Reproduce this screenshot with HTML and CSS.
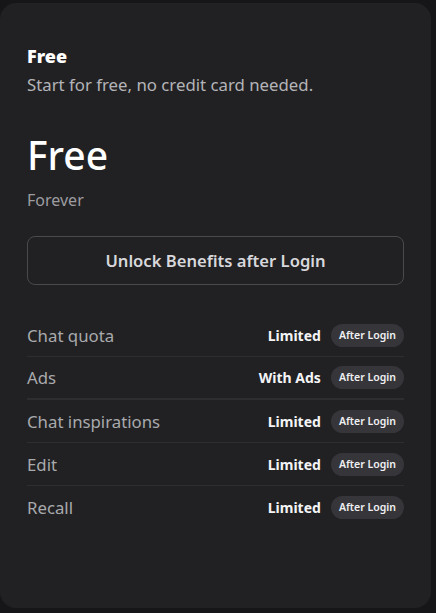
FILE: index.html
```html
<!DOCTYPE html>
<html>
<head>
<meta charset="utf-8">
<link rel="stylesheet" href="styles.css">
</head>
<body>
<div class="card">
  <div class="plan-name">Free</div>
  <div class="plan-desc">Start for free, no credit card needed.</div>
  <div class="price">Free</div>
  <div class="period">Forever</div>
  <button class="unlock">Unlock Benefits after Login</button>
  <ul class="features">
    <li class="row"><span class="label">Chat quota</span><span class="right"><span class="value">Limited</span><span class="badge">After Login</span></span></li>
    <li class="row"><span class="label">Ads</span><span class="right"><span class="value">With Ads</span><span class="badge">After Login</span></span></li>
    <li class="row"><span class="label">Chat inspirations</span><span class="right"><span class="value">Limited</span><span class="badge">After Login</span></span></li>
    <li class="row"><span class="label">Edit</span><span class="right"><span class="value">Limited</span><span class="badge">After Login</span></span></li>
    <li class="row"><span class="label">Recall</span><span class="right"><span class="value">Limited</span><span class="badge">After Login</span></span></li>
  </ul>
</div>
</body>
</html>
```
FILE: styles.css
```css
html, body {
  margin: 0;
  padding: 0;
  background: #161618;
  height: 100%;
}
body {
  font-family: "Noto Sans", "Open Sans", sans-serif;
  padding-top: 3px;
  box-sizing: border-box;
}
.card {
  width: 431px;
  height: 605px;
  box-sizing: border-box;
  background: #212123;
  border-radius: 16px;
  padding: 42px 27px 0 27px;
}
.plan-name {
  color: #ffffff;
  font-weight: 900;
  font-size: 18px;
  line-height: 22px;
}
.plan-desc {
  color: #b4b4b8;
  font-size: 16.8px;
  line-height: 24px;
  margin-top: 6px;
}
.price {
  color: #ffffff;
  font-size: 39px;
  font-weight: 500;
  line-height: 52px;
  margin-top: 32px;
}
.period {
  color: #9c9ca0;
  font-size: 16px;
  line-height: 22px;
  margin-top: 8px;
}
.unlock {
  display: block;
  width: 100%;
  height: 49px;
  margin-top: 25px;
  background: transparent;
  border: 1px solid #4a4a4e;
  border-radius: 8px;
  color: #d8d8dc;
  font-family: inherit;
  font-size: 16.6px;
  font-weight: 600;
  cursor: pointer;
}
.features {
  list-style: none;
  margin: 29px 0 0 0;
  padding: 0;
}
.row {
  display: flex;
  justify-content: space-between;
  align-items: center;
  height: 43px;
  border-bottom: 1px solid #2e2e31;
  box-sizing: border-box;
}
.row:nth-child(2) {
  border-bottom: 2px solid #2e2e31;
}
.row:last-child {
  border-bottom: none;
}
.label {
  color: #a9aaad;
  font-size: 16.8px;
}
.right {
  display: flex;
  align-items: center;
  gap: 10px;
}
.value {
  color: #f4f4f6;
  font-size: 14px;
  font-weight: 700;
}
.badge {
  background: #36363a;
  color: #f0f0f2;
  font-size: 10.5px;
  font-weight: 600;
  height: 23px;
  line-height: 23px;
  padding: 0 8px;
  border-radius: 12px;
}
```
